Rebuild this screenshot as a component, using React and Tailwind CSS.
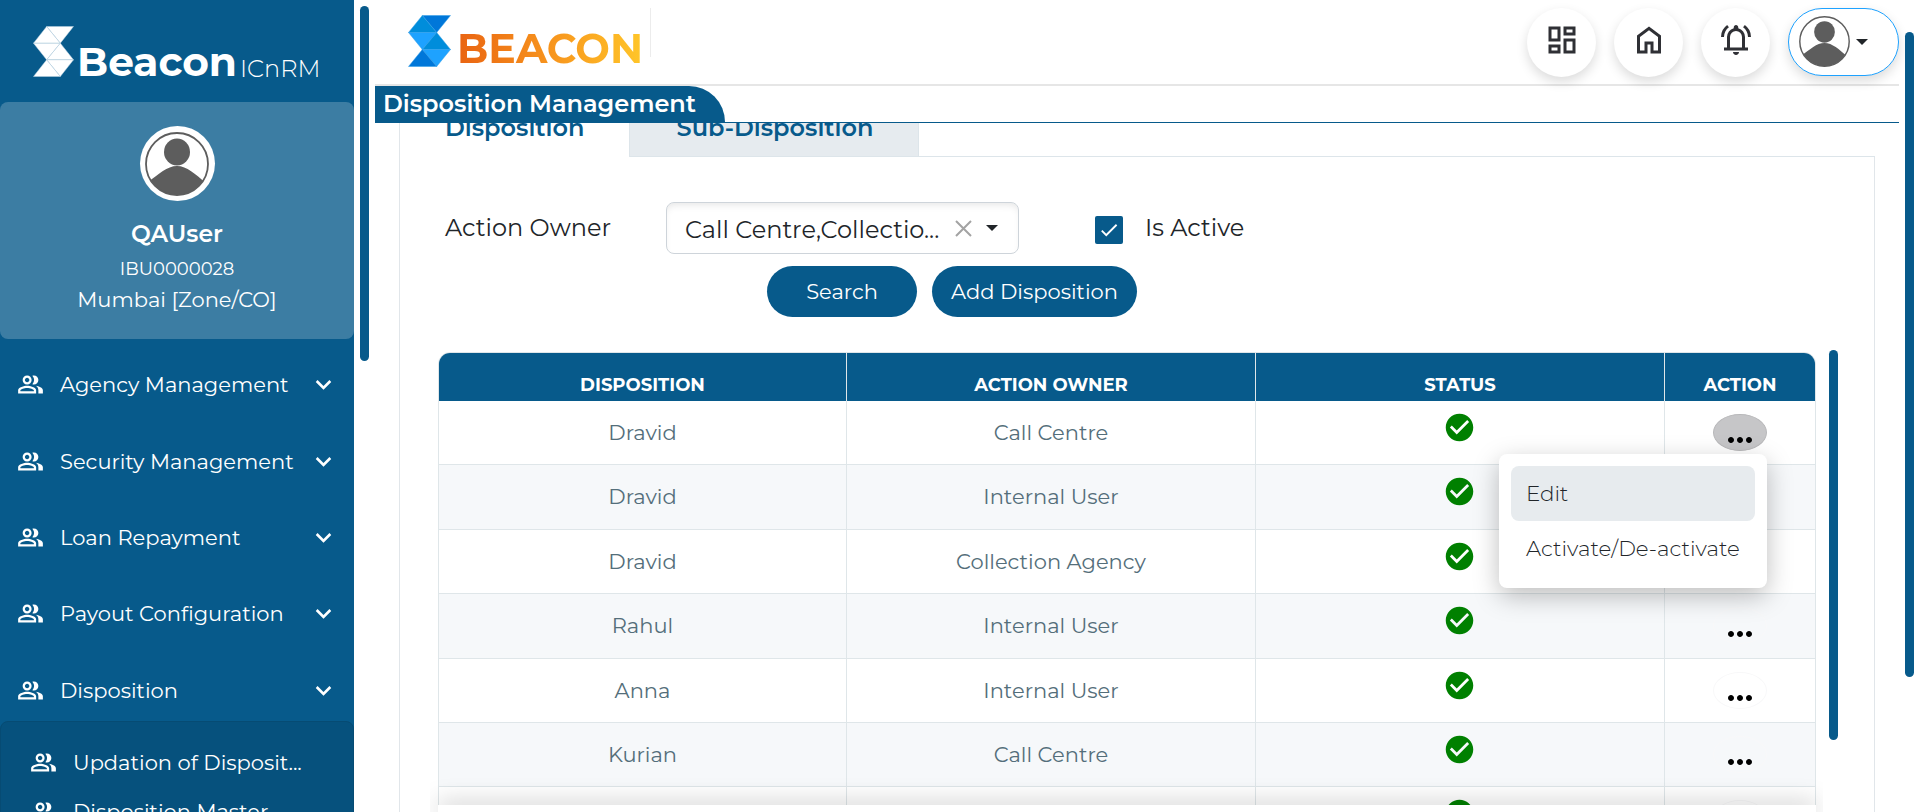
import React from 'react';
import {
  MdCheck,
  MdCheckCircle,
  MdExpandMore,
  MdMoreHoriz,
  MdOutlineDashboard,
  MdOutlinePeopleAlt,
} from 'react-icons/md';

const NAV = [
  'Agency Management',
  'Security Management',
  'Loan Repayment',
  'Payout Configuration',
  'Disposition',
];

const SUB_NAV = ['Updation of Disposit...', 'Disposition Master'];

const ROWS = [
  ['Dravid', 'Call Centre'],
  ['Dravid', 'Internal User'],
  ['Dravid', 'Collection Agency'],
  ['Rahul', 'Internal User'],
  ['Anna', 'Internal User'],
  ['Kurian', 'Call Centre'],
  ['', ''],
];

function LogoMark({ className, colors, line }) {
  return (
    <svg viewBox="0 0 42 52" preserveAspectRatio="none" className={className}>
      <g stroke={line} strokeWidth="0.5" strokeLinejoin="round">
        <path d="M14 0.5H41.5L28 17.5z" fill={colors[0]} />
        <path d="M14 0.5L28 17.5H0.5z" fill={colors[1]} />
        <path d="M0.5 17.5H28L14 34.5z" fill={colors[2]} />
        <path d="M28 17.5L41.5 34.5H14z" fill={colors[1]} />
        <path d="M14 34.5H41.5L28 51.5z" fill={colors[2]} />
        <path d="M14 34.5L28 51.5H0.5z" fill={colors[0]} />
      </g>
    </svg>
  );
}

function Avatar({ className }) {
  return (
    <svg viewBox="0 0 64 64" className={className}>
      <clipPath id="avatar-clip">
        <circle cx="32" cy="32" r="31" />
      </clipPath>
      <circle cx="32" cy="32" r="31" fill="#fff" />
      <g clipPath="url(#avatar-clip)" fill="#5d5d5d">
        <ellipse cx="32" cy="20" rx="13" ry="13.5" />
        <path d="M3 50C14 42 22 34 32 34S50 42 61 51V64H3z" />
      </g>
      <circle cx="32" cy="32" r="31" fill="none" stroke="#5d5d5d" strokeWidth="1.8" />
    </svg>
  );
}

function HomeIcon() {
  return (
    <svg viewBox="0 -960 960 960" className="size-9 fill-[#2f3035]">
      <path d="M240-200h120v-240h240v240h120v-360L480-740 240-560v360Zm-80 80v-480l320-240 320 240v480H520v-240h-80v240H160Z" />
    </svg>
  );
}

function BellIcon() {
  return (
    <svg viewBox="0 -960 960 960" className="size-9 fill-[#2f3035]">
      <path d="M80-560q0-100 44.5-183.5T244-882l47 64q-60 44-95.5 111T160-560H80Zm720 0q0-80-35.5-147T669-818l47-64q75 55 119.5 138.5T880-560h-80ZM160-200v-80h80v-280q0-83 50-147.5T420-792v-28q0-25 17.5-42.5T480-880q25 0 42.5 17.5T540-820v28q80 20 130 84.5T720-560v280h80v80H160Zm320 120q-33 0-56.5-23.5T400-160h160q0 33-23.5 56.5T480-80ZM320-280h320v-280q0-66-47-113t-113-47q-66 0-113 47t-47 113v280Z" />
    </svg>
  );
}

function Caret() {
  return (
    <svg viewBox="0 0 12 6" className="h-1.5 w-3 fill-[#212529]">
      <path d="M0 0H12L6 6z" />
    </svg>
  );
}

function HeaderButton({ children }) {
  return (
    <button className="flex size-[69px] items-center justify-center rounded-full bg-white pb-[5px] shadow-[0_5px_12px_rgba(0,0,0,0.14)]">
      {children}
    </button>
  );
}

function Sidebar() {
  return (
    <aside className="flex w-[354px] shrink-0 flex-col bg-[#075a8b] text-[21px] leading-none text-white">
      <div className="flex h-[102px] shrink-0 items-end pb-[25px] pl-[33px]">
        <LogoMark className="h-[51px] w-[41px]" colors={['#fff', '#fff', '#fff']} line="#b9d2e2" />
        <span className="-mb-1.5 ml-[3px] text-[40.7px] leading-none font-bold">Beacon</span>
        <span className="-mb-1 ml-[3px] text-[24px] leading-none font-light">ICnRM</span>
      </div>

      <div className="flex h-[237px] shrink-0 flex-col items-center rounded-lg bg-[#3c7da3] pt-6">
        <div className="flex size-[75px] items-center justify-center rounded-full bg-white">
          <Avatar className="size-16" />
        </div>
        <div className="mt-[19px] text-[23.5px] leading-7 font-semibold">QAUser</div>
        <div className="mt-[9px] text-lg leading-6">IBU0000028</div>
        <div className="mt-[5px] leading-7">Mumbai [Zone/CO]</div>
      </div>

      <nav className="flex flex-col pt-[7.5px]">
        {NAV.map((label) => (
          <div key={label} className="flex h-[76.4px] items-center pr-[15.5px] pl-[17px]">
            <MdOutlinePeopleAlt className="size-[27px]" />
            <span className="ml-4 grow">{label}</span>
            <MdExpandMore className="size-[31px]" />
          </div>
        ))}
      </nav>

      <div className="-mt-[7px] flex h-40 shrink-0 flex-col gap-[22px] rounded-t-lg border border-[#064b73] bg-[#06517d] pt-[27px] pl-[29px]">
        {SUB_NAV.map((label) => (
          <div key={label} className="flex h-[27px] items-center">
            <MdOutlinePeopleAlt className="size-[27px]" />
            <span className="ml-4 leading-7">{label}</span>
          </div>
        ))}
      </div>
    </aside>
  );
}

function Header() {
  return (
    <header className="flex h-[86px] shrink-0 items-start justify-between border-b-2 border-[#e6e6e6]">
      <div className="flex items-start pl-[33px]">
        <LogoMark className="mt-[15px] h-[52px] w-[43px]" colors={['#0077d9', '#008ddb', '#1ea2ff']} line="#2f9de8" />
        <span className="mt-[27px] ml-1.5 bg-gradient-to-r from-[#e96312] via-[#f7941d] to-[#ffc629] bg-clip-text text-[41px] leading-[42px] font-bold text-transparent">
          BEACON
        </span>
        <span className="mt-2 ml-[7px] h-[49px] w-px bg-[#ececec]" />
      </div>
      <div className="flex gap-[18px] pt-2">
        <HeaderButton>
          <MdOutlineDashboard className="size-9 text-[#2f3035]" />
        </HeaderButton>
        <HeaderButton>
          <HomeIcon />
        </HeaderButton>
        <HeaderButton>
          <BellIcon />
        </HeaderButton>
        <button className="flex h-[68px] w-[111px] items-center gap-1.5 rounded-full border border-[#1ea2ff] bg-white pb-px pl-2.5 shadow-[0_5px_12px_rgba(0,0,0,0.14)]">
          <Avatar className="size-[51px]" />
          <Caret />
        </button>
      </div>
    </header>
  );
}

function ActionMenu() {
  return (
    <div className="absolute top-0 right-0 w-[268px] rounded-lg bg-white p-3 text-left text-[21.4px] font-light text-[#212529] shadow-[0_8px_26px_rgba(0,0,0,0.26)]">
      <div className="flex h-[55px] items-center rounded-lg bg-[#e7ebee] pl-[15px]">Edit</div>
      <div className="flex h-[55px] items-center pl-[15px] whitespace-nowrap">Activate/De-activate</div>
    </div>
  );
}

function DataTable() {
  return (
    <div className="relative h-[460px] w-[1393px] overflow-hidden pr-[7px] pl-2">
      <div className="overflow-hidden rounded-t-xl border border-[#dfe6e9]">
        <div className="grid h-12 grid-cols-[408px_409px_409px_150px] bg-[#075a8b] text-center text-lg leading-[18px] font-bold text-white">
          {['DISPOSITION', 'ACTION OWNER', 'STATUS', 'ACTION'].map((title) => (
            <div key={title} className="border-r border-[#dfe6e9] pt-[23px] last:border-r-0">
              {title}
            </div>
          ))}
        </div>
        {ROWS.map(([disposition, owner], i) => (
          <div
            key={i}
            className="grid h-[64.4px] grid-cols-[408px_409px_409px_150px] border-b border-[#dfe6e9] text-[21px] text-[#546e7a] odd:bg-[#f6f8fa] even:bg-white"
          >
            <div className="flex items-center justify-center border-r border-[#dfe6e9]">{disposition}</div>
            <div className="flex items-center justify-center border-r border-[#dfe6e9]">{owner}</div>
            <div className="flex justify-center border-r border-[#dfe6e9] pt-2.5 pr-px">
              <MdCheckCircle className="size-[33px] text-[#008000]" />
            </div>
            <div className="flex items-start justify-center pt-[13px] pr-px">
              {i === 0 ? (
                <button className="flex h-[37px] w-[54px] items-center justify-center rounded-[50%] border border-[#b8b8ba] bg-[#c6c6c8] pt-3.5">
                  <MdMoreHoriz className="size-9 text-black" />
                </button>
              ) : (
                <button className="flex h-[37px] w-[54px] items-center justify-center rounded-[50%] border border-[#f8f8f9] pt-4">
                  <MdMoreHoriz className="size-9 text-black" />
                </button>
              )}
            </div>
          </div>
        ))}
      </div>
      <div className="absolute top-[102px] right-14 z-10 size-0">
        <ActionMenu />
      </div>
      <div className="absolute right-[7px] bottom-0 left-2 h-[7px] bg-white shadow-[0_0_24px_rgba(0,0,0,0.4)]" />
    </div>
  );
}

function Panel() {
  return (
    <section className="mx-6 flex grow flex-col">
      <div className="flex h-[34px] shrink-0 items-end overflow-hidden text-2xl leading-none font-semibold text-[#075a8b]">
        <div className="flex h-[63px] w-[230px] shrink-0 items-center border-l border-[#e1e6ea] pt-1 pl-[45px]">
          Disposition
        </div>
        <div className="flex h-[63px] w-[290px] shrink-0 items-center justify-center border border-[#dde5ea] bg-[#e6ebef] pt-1 pl-0.5">
          Sub-Disposition
        </div>
        <div className="h-[63px] grow border-b border-[#dde5ea]" />
      </div>

      <div className="flex grow flex-col border-x border-[#e1e6ea] pt-[45px]">
        <div className="flex h-[52px] items-center text-2xl leading-none text-[#212529]">
          <span className="ml-[45px] w-[221px] shrink-0">Action Owner</span>
          <div className="flex h-[52px] w-[353px] shrink-0 items-center rounded-lg border border-[#ced4da] bg-white pl-[18px] shadow-[inset_0_5px_8px_-4px_rgba(0,0,0,0.12)]">
            <span className="w-[270px] pt-1">Call Centre,Collectio...</span>
            <svg viewBox="0 0 17 17" className="size-[17px]" fill="none" stroke="#a3a3a3" strokeWidth="2">
              <path d="M1 1L16 16M16 1L1 16" />
            </svg>
            <span className="ml-3.5">
              <Caret />
            </span>
          </div>
          <span className="mt-1 ml-[76px] flex size-7 shrink-0 items-center justify-center rounded-xs bg-[#075a8b]">
            <MdCheck className="size-[22px] text-white" />
          </span>
          <span className="ml-[22px]">Is Active</span>
        </div>
        <div className="mt-3 ml-[367px] flex gap-[15px] text-[21px] text-white">
          <button className="h-[51px] w-[150px] rounded-full bg-[#075a8b]">Search</button>
          <button className="h-[51px] w-[205px] rounded-full bg-[#075a8b]">Add Disposition</button>
        </div>
        <div className="mt-[33px] ml-[30px] flex items-start">
          <div className="pt-0.5">
            <DataTable />
          </div>
          <div className="ml-1.5 h-[390px] w-[9px] rounded-full bg-[#075a8b]" />
        </div>
      </div>
    </section>
  );
}

export default function App() {
  return (
    <div className="flex h-[812px] w-[1920px] overflow-hidden bg-white font-['Montserrat','Inter',sans-serif]">
      <Sidebar />
      <div className="mt-1.5 ml-1.5 h-[355px] w-[9px] shrink-0 rounded-full bg-[#075a8b]" />
      <main className="ml-1.5 flex w-[1524px] shrink-0 flex-col">
        <Header />
        <div className="flex h-[37px] shrink-0 border-b border-[#075a8b]">
          <h1 className="flex w-[350px] items-center rounded-tr-[36px] bg-[#075a8b] pl-2 text-2xl leading-none font-semibold text-white">
            Disposition Management
          </h1>
        </div>
        <Panel />
      </main>
      <div className="mt-8 ml-1.5 h-[645px] w-[9px] shrink-0 rounded-full bg-[#075a8b]" />
    </div>
  );
}
